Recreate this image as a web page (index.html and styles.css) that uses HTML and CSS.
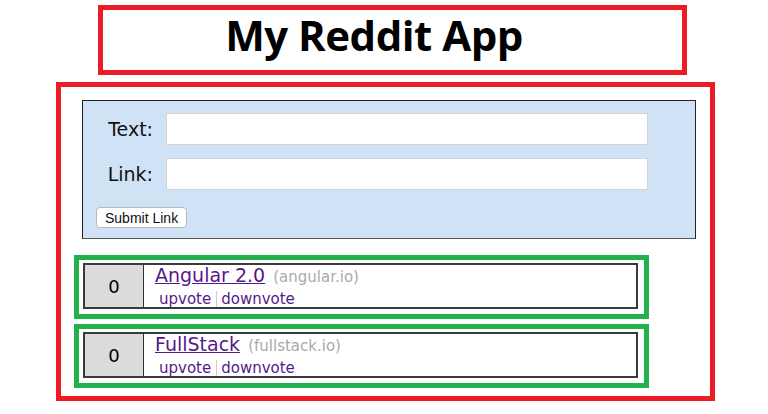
FILE: index.html
```html
<!DOCTYPE html>
<html>
<head>
<meta charset="utf-8">
<link rel="stylesheet" href="styles.css">
</head>
<body>
<header class="app-header"><h1 class="app-title">My Reddit App</h1></header>
<main class="app-main">
  <form class="link-form">
    <div class="field">
      <label class="field-label">Text:</label>
      <input class="field-input" type="text">
    </div>
    <div class="field">
      <label class="field-label">Link:</label>
      <input class="field-input" type="text">
    </div>
    <button class="submit-btn" type="button">Submit Link</button>
  </form>
  <div class="article-list">
    <div class="article-wrap">
      <div class="article">
        <div class="votes">0</div>
        <div class="article-body">
          <div class="article-head"><a class="article-title" href="#">Angular 2.0</a> <span class="domain">(angular.io)</span></div>
          <div class="actions"><a class="action" href="#">upvote</a><span class="sep"></span><a class="action" href="#">downvote</a></div>
        </div>
      </div>
    </div>
    <div class="article-wrap">
      <div class="article">
        <div class="votes">0</div>
        <div class="article-body">
          <div class="article-head"><a class="article-title" href="#">FullStack</a> <span class="domain">(fullstack.io)</span></div>
          <div class="actions"><a class="action" href="#">upvote</a><span class="sep"></span><a class="action" href="#">downvote</a></div>
        </div>
      </div>
    </div>
  </div>
</main>
</body>
</html>
```
FILE: styles.css
```css
* { box-sizing: border-box; }
body {
  margin: 0;
  padding-top: 5px;
  background: #fff;
  font-family: "DejaVu Sans", Verdana, sans-serif;
}
.app-header {
  margin-left: 98px;
  width: 589px;
  height: 70px;
  border: 5px solid #ed1c24;
  display: flex;
  align-items: center;
  justify-content: center;
  padding: 0 37px 10px 0;
}
.app-title {
  margin: 0;
  font-family: "Open Sans", "DejaVu Sans", sans-serif;
  font-weight: 700;
  font-size: 42px;
  letter-spacing: -0.5px;
  line-height: 1;
  color: #000;
}
.app-main {
  margin: 7px 0 0 56px;
  width: 659px;
  height: 319px;
  border: 5px solid #ed1c24;
  padding: 13px 0 0 21px;
}
.link-form {
  width: 614px;
  height: 139px;
  background: #cfe2f6;
  border: 1px solid #222;
  border-bottom-color: #555;
  padding: 12px 0 0 0;
}
.field {
  display: flex;
  align-items: center;
  gap: 13px;
  margin-bottom: 13px;
}
.field-label {
  width: 70px;
  text-align: right;
  font-size: 19px;
  color: #111;
}
.field-input {
  width: 482px;
  height: 32px;
  border: 1px solid #d4d4d4;
  background: #fff;
  margin: 0;
  padding: 0 6px;
  outline: none;
}
.submit-btn {
  display: block;
  margin: 17px 0 0 13px;
  height: 21px;
  padding: 0 8px;
  font-family: "Liberation Sans", Arial, sans-serif;
  font-size: 14px;
  color: #111;
  background: #fff;
  border: 1px solid #b8b8b8;
  border-radius: 4px;
}
.article-list {
  margin: 16px 0 0 -8px;
}
.article-wrap {
  width: 575px;
  border: 5px solid #22b14c;
  padding: 3px 6px 5px 4px;
  margin-bottom: 5px;
}
.article {
  display: flex;
  width: 555px;
  height: 46px;
  border: 2px solid #3a3a3a;
  background: #fff;
}
.votes {
  width: 59px;
  background: #dcdcdc;
  border-right: 1px solid #333;
  display: flex;
  align-items: center;
  justify-content: center;
  font-size: 18px;
  color: #000;
}
.article-body {
  padding-left: 11px;
}
.article-head {
  line-height: 20px;
  white-space: nowrap;
}
.article-title {
  font-size: 19px;
  color: #551a8b;
  text-decoration: underline;
}
.domain {
  margin-left: 3px;
  font-size: 15px;
  color: #aaa;
}
.actions {
  margin-top: 3px;
  display: flex;
  align-items: center;
  padding-left: 4px;
  line-height: 18px;
}
.action {
  font-size: 15px;
  color: #551a8b;
  text-decoration: none;
}
.sep {
  width: 1px;
  height: 16px;
  background: #ccc;
  margin: 0 4px 0 5px;
}
```
